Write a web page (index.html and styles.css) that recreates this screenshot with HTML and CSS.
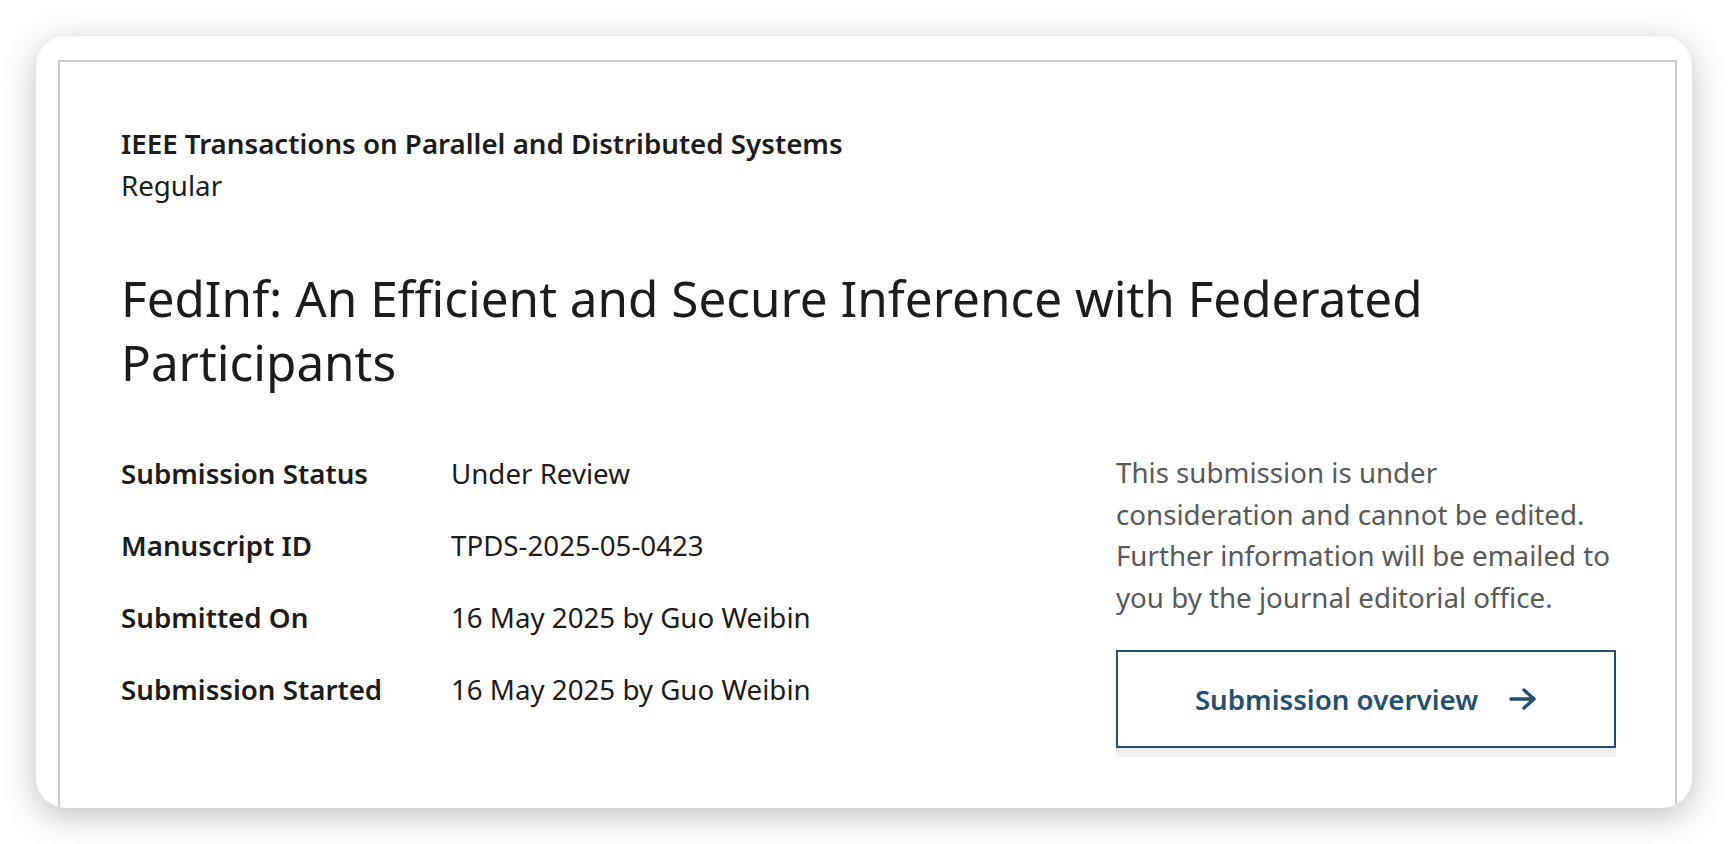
FILE: index.html
```html
<!DOCTYPE html>
<html lang="en">
<head>
<meta charset="utf-8">
<title>Submission</title>
<link rel="stylesheet" href="styles.css">
</head>
<body>
<div class="window">
  <div class="panel">
    <div class="journal">
      <div class="journal-name">IEEE Transactions on Parallel and Distributed Systems</div>
      <div class="journal-type">Regular</div>
    </div>
    <h1 class="title">FedInf: An Efficient and Secure Inference with Federated Participants</h1>
    <div class="details">
      <dl class="meta">
        <dt>Submission Status</dt><dd>Under Review</dd>
        <dt>Manuscript ID</dt><dd>TPDS-2025-05-0423</dd>
        <dt>Submitted On</dt><dd>16 May 2025 by Guo Weibin</dd>
        <dt>Submission Started</dt><dd>16 May 2025 by Guo Weibin</dd>
      </dl>
      <div class="side">
        <p class="note">This submission is under consideration and cannot be edited. Further information will be emailed to you by the journal editorial office.</p>
        <a class="btn" href="#">
          <span>Submission overview</span>
          <svg class="arrow" width="28" height="24" viewBox="0 0 28 24" aria-hidden="true"><path d="M2 12H25M15 3l10 9-10 9" fill="none" stroke="currentColor" stroke-width="3.4" stroke-linecap="round" stroke-linejoin="round"/></svg>
        </a>
      </div>
    </div>
  </div>
</div>
</body>
</html>
```
FILE: styles.css
```css
* { box-sizing: border-box; }
html, body {
  margin: 0;
  padding: 0;
  background: #ffffff;
}
body {
  font-family: "Noto Sans", "Open Sans", sans-serif;
  color: #1c1c1c;
  height: 844px;
  overflow: hidden;
}
.window {
  margin: 36px 0 0 36px;
  width: 1656px;
  height: 772px;
  background: #ffffff;
  border-radius: 30px;
  box-shadow: 0 8px 34px rgba(0, 0, 0, 0.26);
  overflow: hidden;
  padding: 24px 15px 0 22px;
}
.panel {
  border: 2px solid #cccccc;
  height: 900px;
  padding: 60px 59px 0 61px;
}
.journal {
  font-size: 27.7px;
  line-height: 42px;
}
.journal-name { font-weight: 600; }
.title {
  margin: 60px 0 0;
  font-size: 49.4px;
  line-height: 63.5px;
  font-weight: 400;
  color: #1c1c1c;
}
.details {
  margin-top: 59px;
  display: flex;
  justify-content: space-between;
  align-items: flex-start;
}
.meta {
  margin: 0;
  display: grid;
  grid-template-columns: 330px auto;
  row-gap: 30px;
  font-size: 27.7px;
  line-height: 42px;
}
.meta dt { font-weight: 600; }
.meta dd { margin: 0; }
.side {
  width: 500px;
}
.note {
  margin: 0;
  font-size: 27.7px;
  line-height: 41.7px;
  color: #595959;
}
.btn {
  margin-top: 31px;
  height: 98px;
  border: 2px solid #1f5070;
  box-shadow: 0 9px 0 #f1f1f1;
  display: flex;
  align-items: center;
  justify-content: center;
  gap: 31px;
  color: #1f5070;
  text-decoration: none;
  font-size: 27.7px;
  font-weight: 600;
}
.arrow { display: block; }
```
